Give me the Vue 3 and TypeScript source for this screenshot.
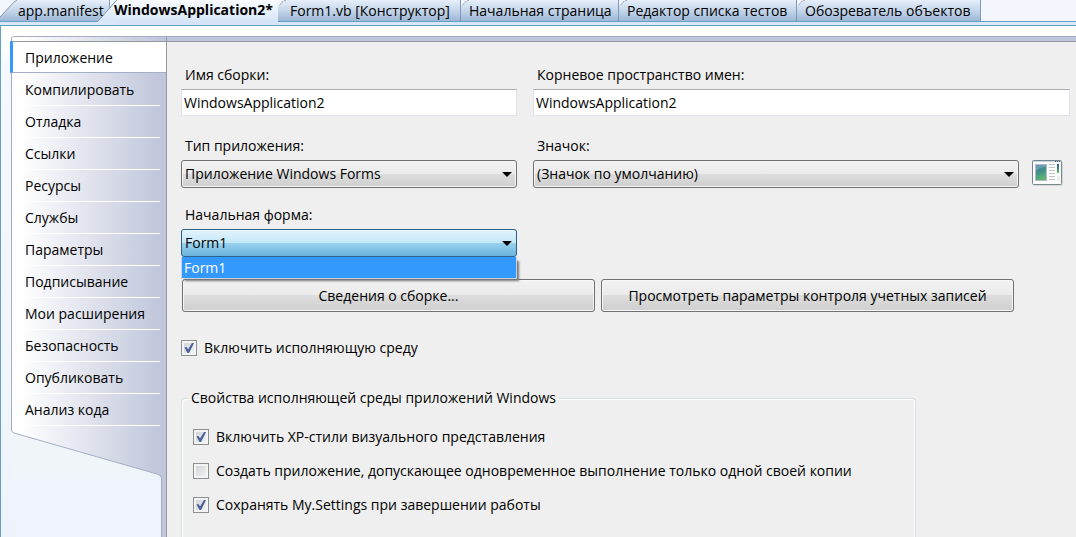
<script setup lang="ts">
import { ref } from 'vue'

interface Tab {
  id: string
  title: string
}

const tabs: Tab[] = [
  { id: 'manifest', title: 'app.manifest' },
  { id: 'project', title: 'WindowsApplication2*' },
  { id: 'designer', title: 'Form1.vb [Конструктор]' },
  { id: 'start', title: 'Начальная страница' },
  { id: 'tests', title: 'Редактор списка тестов' },
  { id: 'browser', title: 'Обозреватель объектов' },
]
const activeTab = ref('project')

const sections: string[] = [
  'Приложение',
  'Компилировать',
  'Отладка',
  'Ссылки',
  'Ресурсы',
  'Службы',
  'Параметры',
  'Подписывание',
  'Мои расширения',
  'Безопасность',
  'Опубликовать',
  'Анализ кода',
]
const activeSection = ref('Приложение')

const assemblyName = ref('WindowsApplication2')
const rootNamespace = ref('WindowsApplication2')
const appType = ref('Приложение Windows Forms')
const appIcon = ref('(Значок по умолчанию)')
const startupForm = ref('Form1')
const formListOpen = ref(true)
const frameworkEnabled = ref(true)

const options = ref([
  { id: 'xp', label: 'Включить XP-стили визуального представления', on: true },
  { id: 'single', label: 'Создать приложение, допускающее одновременное выполнение только одной своей копии', on: false },
  { id: 'save', label: 'Сохранять My.Settings при завершении работы', on: true },
])
</script>

<template>
  <div class="window">
    <nav class="tabs" aria-label="Документы">
      <button
        v-for="tab in tabs"
        :key="tab.id"
        type="button"
        class="tab"
        :class="['tab-' + tab.id, { active: tab.id === activeTab }]"
        @click="activeTab = tab.id"
      >
        <svg v-if="tab.id === 'project'" class="edge" width="20" height="22" viewBox="0 0 20 22" aria-hidden="true">
          <path d="M19 0L16 3L3 18L0 21V22H22V0Z" fill="url(#activeFill)" />
          <path d="M19 0L16 3L3 18L0 21" fill="none" stroke="#7f9db5" />
          <defs>
            <linearGradient id="activeFill" x1="0" y1="0" x2="0" y2="1">
              <stop offset="0" stop-color="#fafcff" />
              <stop offset="1" stop-color="#d5e5f7" />
            </linearGradient>
          </defs>
        </svg>
        <svg v-else-if="tab.id === 'manifest'" class="edge" width="20" height="21" viewBox="0 0 20 21" aria-hidden="true">
          <path d="M0 0H17L14 2L0 17Z" fill="#f3f6fd" />
          <path d="M17 0L14 2L0 17" fill="none" stroke="#8f99a8" />
        </svg>
        <svg v-else class="edge" width="8" height="7" viewBox="0 0 8 7" aria-hidden="true">
          <path d="M0 0H7L4 2L1 6H0Z" fill="#f3f6fd" />
          <path d="M8 0L4 2L1 6" fill="none" stroke="#8f99a8" stroke-dasharray="2 1" />
        </svg>
        <span>{{ tab.title }}</span>
      </button>
    </nav>

    <div class="document">
      <aside class="side">
        <nav class="sections" aria-label="Разделы">
          <button
            v-for="name in sections"
            :key="name"
            type="button"
            class="section"
            :class="{ current: name === activeSection }"
            @click="activeSection = name"
          >
            {{ name }}
          </button>
        </nav>
        <svg class="slope" width="155" height="52" viewBox="0 0 155 52" aria-hidden="true">
          <path d="M0 0V4Q0 6 3 7L146 48Q150 49 150 52H0Z" fill="#f0f5fa" />
          <path d="M0.500 0V4Q0.500 6 3 7L146 48Q150.500 49 150.500 52" fill="none" stroke="#a4afc6" />
        </svg>
        <div class="stem"></div>
      </aside>

      <main class="page">
        <div class="fields">
          <div class="field first">
            <label for="assembly">Имя сборки:</label>
            <input id="assembly" v-model="assemblyName" type="text" class="text" />
          </div>
          <div class="field first">
            <label for="namespace">Корневое пространство имен:</label>
            <input id="namespace" v-model="rootNamespace" type="text" class="text" />
          </div>
          <div class="field">
            <label for="apptype">Тип приложения:</label>
            <div class="combo">
              <select id="apptype" v-model="appType">
                <option>Приложение Windows Forms</option>
              </select>
              <svg class="arrow" width="10" height="5" viewBox="0 0 10 5" aria-hidden="true"><path d="M0 0H10L5 5Z" /></svg>
            </div>
          </div>
          <div class="field">
            <label for="icon">Значок:</label>
            <div class="icon-row">
              <div class="combo">
                <select id="icon" v-model="appIcon">
                  <option>(Значок по умолчанию)</option>
                </select>
                <svg class="arrow" width="10" height="5" viewBox="0 0 10 5" aria-hidden="true"><path d="M0 0H10L5 5Z" /></svg>
              </div>
              <svg class="app-icon" width="32" height="28" viewBox="0 1 32 28" aria-hidden="true">
                <defs>
                  <linearGradient id="pane" x1="0" y1="0" x2="0.300" y2="1">
                    <stop offset="0" stop-color="#4878a6" />
                    <stop offset="0.500" stop-color="#3f8f8c" />
                    <stop offset="1" stop-color="#5cb472" />
                  </linearGradient>
                  <linearGradient id="bar" x1="0" y1="0" x2="0" y2="1">
                    <stop offset="0" stop-color="#2c5fa0" />
                    <stop offset="0.500" stop-color="#3a8088" />
                    <stop offset="1" stop-color="#6cc25c" />
                  </linearGradient>
                </defs>
                <rect x="2" y="3" width="29" height="24" rx="1" fill="#d8dada" />
                <rect x="0.500" y="1.500" width="29" height="24" rx="1" fill="#fbfcfc" stroke="#78868f" />
                <rect x="1" y="2" width="28" height="1" fill="#c3d3da" />
                <path d="M23 2h1v1h-1zM25 2h1v1h-1zM27 2h1v1h-1z" fill="#4d5c66" />
                <rect x="3" y="5" width="12" height="17" fill="#b4b9d0" />
                <rect x="4" y="6" width="10" height="15" fill="url(#pane)" />
                <path d="M4 12Q8 8 14 8V6H4Z" fill="#ffffff" opacity="0.200" />
                <path d="M17 5.500h6M17 8.500h6M17 11.500h6M17 14.500h6M17 17.500h6M17 20.500h6" stroke="#c4c4c4" />
                <rect x="25" y="5" width="2" height="9" fill="url(#bar)" />
                <rect x="25" y="17" width="3" height="5" fill="#eeeeea" />
              </svg>
            </div>
          </div>
          <div class="field">
            <label for="startup">Начальная форма:</label>
            <div class="combo open">
              <select id="startup" v-model="startupForm" @mousedown.prevent="formListOpen = !formListOpen">
                <option>Form1</option>
              </select>
              <svg class="arrow" width="10" height="5" viewBox="0 0 10 5" aria-hidden="true"><path d="M0 0H10L5 5Z" /></svg>
              <ul v-if="formListOpen" class="list" role="listbox" aria-label="Начальная форма">
                <li role="option" aria-selected="true" @click="formListOpen = false">Form1</li>
              </ul>
            </div>
          </div>
        </div>

        <div class="actions">
          <button type="button">Сведения о сборке...</button>
          <button type="button">Просмотреть параметры контроля учетных записей</button>
        </div>

        <label class="check framework">
          <input v-model="frameworkEnabled" type="checkbox" />
          <svg v-if="frameworkEnabled" class="tick" width="16" height="16" viewBox="0 0 16 16" aria-hidden="true"><path d="M3.500 7.500L5.500 7L7 9.500L11 3H13L8 13H6.500Z" /></svg>
          <span>Включить исполняющую среду</span>
        </label>

        <fieldset class="group">
          <legend>Свойства исполняющей среды приложений Windows</legend>
          <label v-for="option in options" :key="option.id" class="check">
            <input v-model="option.on" type="checkbox" />
            <svg v-if="option.on" class="tick" width="16" height="16" viewBox="0 0 16 16" aria-hidden="true"><path d="M3.500 7.500L5.500 7L7 9.500L11 3H13L8 13H6.500Z" /></svg>
            <span>{{ option.label }}</span>
          </label>
        </fieldset>
      </main>
    </div>
  </div>
</template>

<style>
body {
  margin: 0;
}
</style>

<style scoped>
* {
  box-sizing: border-box;
}
.window {
  display: flex;
  flex-direction: column;
  height: 100vh;
  overflow: hidden;
  background: #f3f6fd;
  color: #000;
  font: 14px/20px "Open Sans", "Noto Sans", sans-serif;
}
button,
input,
select {
  margin: 0;
  color: inherit;
  font: inherit;
}
.tabs {
  display: flex;
  flex: none;
  height: 26px;
  border-bottom: 1px solid #64a0c2;
  background: linear-gradient(#f3f6fd 21px, #64a0c2 21px, #64a0c2 22px, #d9e8f8 22px);
}
.tab {
  position: relative;
  flex: none;
  height: 21px;
  padding: 0 0 0 8px;
  border: 0;
  border-right: 1px solid #7e97bb;
  background: linear-gradient(#e6effa, #c5d6ea 50%, #9db7d6);
  text-align: left;
  white-space: nowrap;
}
.tab span {
  position: relative;
}
.edge {
  position: absolute;
  top: 0;
  left: 0;
}
.tab-manifest {
  width: 110px;
  padding-left: 18px;
}
.tab.active {
  z-index: 1;
  width: 180px;
  height: 25px;
  margin-left: -12px;
  padding: 0 0 6px 16px;
  border-right: 0;
  background: linear-gradient(#fafcff, #d5e5f7 22px) 20px 0 no-repeat;
  font-weight: 700;
}
.tab-designer {
  width: 183px;
  padding-left: 12px;
}
.tab-start {
  width: 158px;
}
.tab-tests {
  width: 178px;
}
.tab-browser {
  width: 184px;
}
.document {
  display: flex;
  flex: 1;
  min-height: 0;
  padding: 10px 0 0 10px;
  border-left: 1px solid #64a0c2;
  background: linear-gradient(#ffffff 10px, #f5f8fe 40px, #f0f5fa 80%, #eef2fc);
}
.side {
  display: flex;
  flex-direction: column;
  flex: none;
  width: 156px;
  border-top: 1px solid #a4afc6;
  border-right: 1px solid #96979c;
  border-top-left-radius: 4px;
  background: linear-gradient(to right, #ffffff 10px, #c0c6db 150px);
}
.sections {
  display: flex;
  flex-direction: column;
  padding-top: 4px;
  border-left: 1px solid #a4afc6;
}
.section {
  height: 32px;
  margin: 0 6px 0 4px;
  padding: 0 0 0 9px;
  border: 0;
  border-bottom: 1px solid #ffffff;
  background: none;
  text-align: left;
  white-space: nowrap;
}
.section.current {
  margin: 0 0 1px -2px;
  padding: 2px 0 0 12px;
  border-top: 1px solid #96979c;
  border-bottom: 1px solid #a4afc6;
  border-left: 3px solid #3399ff;
  background: #ffffff;
}
.slope {
  flex: none;
}
.stem {
  flex: 1;
  width: 151px;
  border-right: 1px solid #a4afc6;
  background: #eff3fb;
}
.page {
  display: flex;
  flex: 1;
  flex-direction: column;
  min-width: 0;
  padding: 28px 6px 0 14px;
  border-top: 1px solid #a4afc6;
  background: linear-gradient(#c0c6db 4px, #96979c 4px, #96979c 5px, #efefef 5px);
}
.fields {
  display: grid;
  grid-template-columns: 336px minmax(0, 1fr);
  column-gap: 16px;
}
.field {
  display: flex;
  flex-direction: column;
  gap: 4px;
  padding-bottom: 17px;
}
.field.first {
  padding-bottom: 20px;
}
.field label {
  padding-left: 4px;
}
.text {
  width: 100%;
  height: 27px;
  padding: 0 2px;
  border: 1px solid #e2e3ea;
  border-top-color: #abadb3;
  background: #ffffff;
}
.combo {
  position: relative;
  flex: 1;
}
.combo select {
  display: block;
  width: 100%;
  height: 28px;
  padding: 0 24px 0 3px;
  border: 1px solid #707070;
  border-radius: 3px;
  appearance: none;
  background: linear-gradient(#f2f2f2, #ebebeb 48%, #dddddd 50%, #cfcfcf);
  box-shadow: inset 0 0 0 1px #f6f6f6;
}
.combo.open select {
  border-color: #2c628b;
  background: linear-gradient(#e3f4fc, #c4e7f8 48%, #98d1ef 52%, #68b3db);
  box-shadow: none;
}
.arrow {
  position: absolute;
  top: 12px;
  right: 5px;
  pointer-events: none;
}
.list {
  position: absolute;
  top: 28px;
  right: 0;
  left: 0;
  z-index: 2;
  margin: 0;
  padding: 0;
  border: 1px solid #c8d4e4;
  border-top: 0;
  background: #3399ff;
  box-shadow: 3px 3px 2px -1px #777777;
  color: #ffffff;
  list-style: none;
}
.list li {
  height: 21px;
  padding-left: 2px;
  line-height: 22px;
}
.icon-row {
  display: flex;
  gap: 13px;
  padding-right: 6px;
}
.app-icon {
  flex: none;
}
.actions {
  display: grid;
  grid-template-columns: 1fr 1fr;
  gap: 6px;
  margin-top: 5px;
  padding: 0 56px 0 1px;
}
.actions button {
  height: 33px;
  padding: 0;
  border: 1px solid #707070;
  border-radius: 3px;
  background: linear-gradient(#f2f2f2, #ebebeb 48%, #dddddd 50%, #cfcfcf);
  box-shadow: inset 0 0 0 1px #f6f6f6;
  white-space: nowrap;
}
.check {
  display: flex;
  position: relative;
  align-items: center;
  gap: 7px;
}
.check input {
  flex: none;
  width: 16px;
  height: 16px;
  border: 1px solid #8e8f8f;
  appearance: none;
  background: linear-gradient(135deg, #cbcfd5, #f6f6f6);
  box-shadow: inset 0 0 0 2px #f4f4f4;
}
.tick {
  position: absolute;
  top: 2px;
  left: 0;
  pointer-events: none;
}
.tick path {
  fill: #4a5f97;
}
.framework {
  margin-top: 26px;
}
.group {
  display: flex;
  flex: 1;
  flex-direction: column;
  gap: 14px;
  width: 735px;
  max-width: 100%;
  min-width: 0;
  margin: 30px 0 0;
  padding: 19px 0 0 11px;
  border: 1px solid #d5dfe5;
  border-bottom: 0;
  border-radius: 4px 4px 0 0;
  box-shadow: inset 1px 1px #ffffff, inset -1px 0 #ffffff;
}
.group legend {
  margin-left: -5px;
  padding: 0 3px;
}
</style>
